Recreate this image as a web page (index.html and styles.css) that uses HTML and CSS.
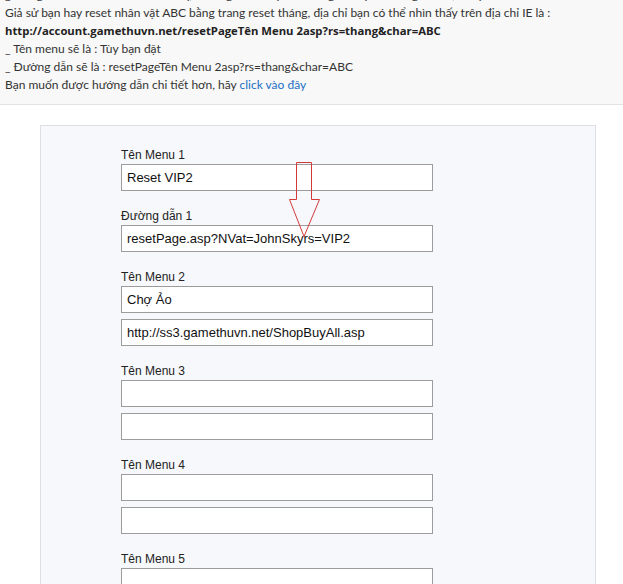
FILE: index.html
```html
<!DOCTYPE html>
<html lang="vi">
<head>
<meta charset="utf-8">
<title>Menu</title>
<link rel="stylesheet" href="styles.css">
</head>
<body>
<div class="guide">
  <div class="guide-text">
    <p>_ Trong đó Tên Menu là tên hiển thị, Đường dẫn là địa chỉ trang mà bạn muốn gắn vào, ví dụ như sau :</p>
    <p>Giả sử bạn hay reset nhân vật ABC bằng trang reset tháng, địa chỉ bạn có thể nhìn thấy trên địa chỉ IE là :</p>
    <p class="strong">http://account.gamethuvn.net/resetPageTên Menu 2asp?rs=thang&amp;char=ABC</p>
    <p>_ Tên menu sẽ là : Tùy bạn đặt</p>
    <p>_ Đường dẫn sẽ là : resetPageTên Menu 2asp?rs=thang&amp;char=ABC</p>
    <p>Bạn muốn được hướng dẫn chi tiết hơn, hãy <a class="link" href="#">click vào đây</a></p>
  </div>
</div>

<div class="panel">
  <div class="group">
    <div class="label">Tên Menu 1</div>
    <input class="field" type="text" value="Reset VIP2">
    <div class="label label-sub">Đường dẫn 1</div>
    <input class="field" type="text" value="resetPage.asp?NVat=JohnSkyrs=VIP2">
  </div>
  <div class="group">
    <div class="label">Tên Menu 2</div>
    <input class="field" type="text" value="Chợ Ảo">
    <input class="field field-next" type="text" value="http://ss3.gamethuvn.net/ShopBuyAll.asp">
  </div>
  <div class="group">
    <div class="label">Tên Menu 3</div>
    <input class="field" type="text" value="">
    <input class="field field-next" type="text" value="">
  </div>
  <div class="group">
    <div class="label">Tên Menu 4</div>
    <input class="field" type="text" value="">
    <input class="field field-next" type="text" value="">
  </div>
  <div class="group">
    <div class="label">Tên Menu 5</div>
    <input class="field" type="text" value="">
    <input class="field field-next" type="text" value="">
  </div>
</div>

<svg class="arrow" width="40" height="80" viewBox="0 0 40 80">
  <polygon points="7.5,0.5 22.5,0.5 22.5,37.5 30.5,37.5 15,74.5 0.5,37.5 7.5,37.5" fill="none" stroke="#d23a3a" stroke-width="1"/>
</svg>
</body>
</html>
```

FILE: styles.css
```css
html, body {
  margin: 0;
  padding: 0;
  background: #ffffff;
}

body {
  position: relative;
  overflow: hidden;
  height: 584px;
}

.guide {
  background: #f8f8f8;
  border-bottom: 1px solid #e3e3e3;
  padding: 0 5px 10px;
  overflow: hidden;
  font-family: Lato, "Open Sans", sans-serif;
  font-size: 12px;
  line-height: 18px;
  color: #333333;
}

.guide-text {
  margin-top: -14px;
}

.guide-text p {
  margin: 0;
  white-space: nowrap;
}

.guide-text .strong {
  font-family: "Open Sans", sans-serif;
  font-size: 11.3px;
  font-weight: bold;
  color: #222222;
}

.link {
  color: #1a6fc4;
  text-decoration: none;
}

.panel {
  margin: 20px 0 0 40px;
  width: 556px;
  background: #f7f8fc;
  border: 1px solid #dedee5;
  padding: 20px 0 40px 80px;
  box-sizing: border-box;
  min-height: 600px;
}

.group {
  display: flex;
  flex-direction: column;
  align-items: flex-start;
  margin-bottom: 16px;
}

.label {
  font-family: "Liberation Sans", Arial, sans-serif;
  font-size: 12px;
  line-height: 18px;
  height: 18px;
  color: #222222;
}

.label-sub {
  margin-top: 16px;
}

.field {
  display: block;
  box-sizing: border-box;
  width: 312px;
  height: 27px;
  margin: 0;
  padding: 0 5px;
  border: 1px solid #9c9c9c;
  background: #ffffff;
  font-family: "Liberation Sans", Arial, sans-serif;
  font-size: 13px;
  color: #111111;
  outline: none;
}

.field-next {
  margin-top: 6px;
}

.arrow {
  position: absolute;
  left: 289px;
  top: 162px;
}
```
